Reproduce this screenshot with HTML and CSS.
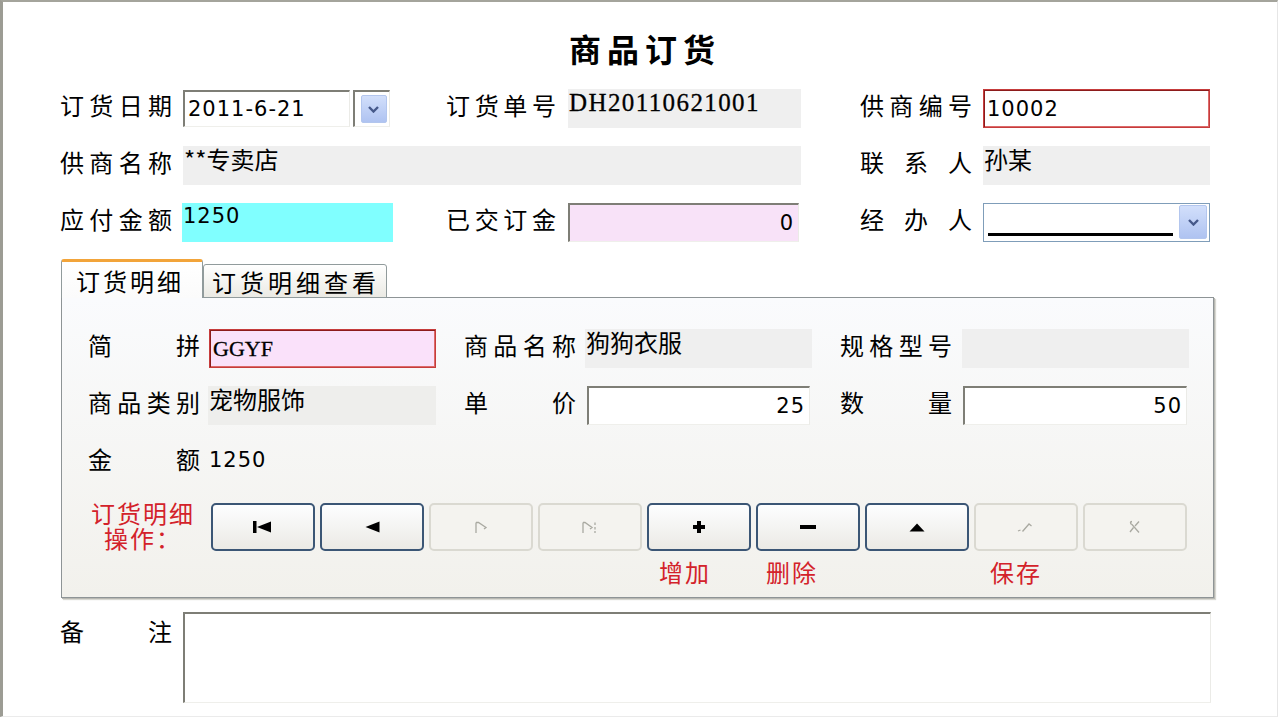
FILE: index.html
```html
<!DOCTYPE html>
<html lang="zh-CN">
<head>
<meta charset="utf-8">
<title>商品订货</title>
<link rel="stylesheet" href="styles.css">
</head>
<body>
<div class="window">
  <h1 class="title">商品订货</h1>
  <div class="main">
    <div class="form-grid">
      <span class="lbl">订货日期</span>
      <div class="date-combo">
        <div class="sunken field-in num date-input">2011-6-21</div>
        <div class="sunken date-drop">
          <span class="drop-btn"><svg width="11" height="7" viewBox="0 0 11 7"><path d="M1 1 L5.5 5.5 L10 1" fill="none" stroke="#46598a" stroke-width="2.4"/></svg></span>
        </div>
      </div>
      <span class="lbl lbl-mid">订货单号</span>
      <div class="ro mono w233">DH20110621001</div>
      <span class="lbl">供商编号</span>
      <div class="red-input field-in num w227">10002</div>

      <span class="lbl">供商名称</span>
      <div class="ro span3">**专卖店</div>
      <span class="lbl">联系人</span>
      <div class="ro w227">孙某</div>

      <span class="lbl">应付金额</span>
      <div class="ro cyan num">1250</div>
      <span class="lbl lbl-mid">已交订金</span>
      <div class="sunken field-in num right pink w231">0</div>
      <span class="lbl">经办人</span>
      <div class="combo">
        <span class="combo-line"></span>
        <span class="drop-btn combo-btn"><svg width="11" height="7" viewBox="0 0 11 7"><path d="M1 1 L5.5 5.5 L10 1" fill="none" stroke="#46598a" stroke-width="2.4"/></svg></span>
      </div>
    </div>

    <div class="tabs">
      <div class="tab active">订货明细</div>
      <div class="tab">订货明细查看</div>
    </div>

    <div class="panel">
      <div class="detail-grid">
        <span class="lbl">简拼</span>
        <div class="red-input field-in mono pink w227 ml1">GGYF</div>
        <span class="lbl">商品名称</span>
        <div class="ro w227">狗狗衣服</div>
        <span class="lbl">规格型号</span>
        <div class="ro w227"></div>

        <span class="lbl">商品类别</span>
        <div class="ro w228 soft">宠物服饰</div>
        <span class="lbl">单价</span>
        <div class="sunken field-in num right w223 ml2">25</div>
        <span class="lbl">数量</span>
        <div class="sunken field-in num right w224 ml1">50</div>

        <span class="lbl">金额</span>
        <div class="ro clear num w228">1250</div>
      </div>

      <div class="ops">
        <div class="ops-label"><span class="ops-line">订货明细</span><span class="ops-line">操作：</span></div>
        <button class="btn"><svg width="20" height="12" viewBox="0 0 20 12"><rect x="0" y="0" width="3.5" height="12"/><path d="M4 6 L18 0.5 V11.5 Z"/></svg></button>
        <button class="btn"><svg width="15" height="12" viewBox="0 0 15 12"><path d="M0.5 6 L14.5 0.5 V11.5 Z"/></svg></button>
        <button class="btn off"><svg width="14" height="13" viewBox="0 0 14 13"><path d="M2 1.5 V12 M2 1.5 H4.5 L12 6.5 L10 8" fill="none" stroke="#a9a9a1" stroke-width="1.3"/></svg></button>
        <button class="btn off"><svg width="18" height="13" viewBox="0 0 18 13"><path d="M2 1.5 V12 M2 1.5 H4 L11 6.5 L9 8 M14 1.5 V4 M14 6 V8.5 M14 10 V12" fill="none" stroke="#a9a9a1" stroke-width="1.3"/></svg></button>
        <button class="btn"><svg width="14" height="14" viewBox="0 0 14 14"><path d="M7 1 V13 M1 7 H13" stroke="#000" stroke-width="4"/></svg></button>
        <button class="btn"><svg width="18" height="6" viewBox="0 0 18 6"><path d="M1 3 H17" stroke="#000" stroke-width="4"/></svg></button>
        <button class="btn"><svg width="16" height="9" viewBox="0 0 16 9"><path d="M8 0.5 L15.5 8.5 H0.5 Z"/></svg></button>
        <button class="btn off"><svg width="18" height="12" viewBox="0 0 18 12"><path d="M1 10 L3.5 9 M5.5 10.5 L12 3 L14.5 5" fill="none" stroke="#a9a9a1" stroke-width="1.3"/></svg></button>
        <button class="btn off"><svg width="16" height="14" viewBox="0 0 16 14"><path d="M5 1.5 C3 1.5 3 3.5 5 4.5 L12 12.5 M12 1.5 L8 6 M6.5 7.5 L3 12" fill="none" stroke="#a9a9a1" stroke-width="1.3"/></svg></button>
        <span class="cap c5">增加</span>
        <span class="cap c6">删除</span>
        <span class="cap c8">保存</span>
      </div>
    </div>

    <div class="memo-row">
      <span class="lbl">备注</span>
      <div class="sunken memo"></div>
    </div>
  </div>
</div>
</body>
</html>
```

FILE: styles.css
```css
* { box-sizing: border-box; }

html, body {
  margin: 0;
  padding: 0;
  background: #ffffff;
}

body {
  font-family: "Noto Sans CJK SC", "Noto Sans", sans-serif;
  font-size: 24px;
  color: #000;
}

.window {
  width: 1278px;
  height: 717px;
  border-top: 2px solid #a4a49c;
  border-left: 3px solid #9c9c94;
  border-right: 1px solid #e6e6e6;
  border-bottom: 1px solid #ebebeb;
  background: #fff;
  overflow: hidden;
}

.title {
  margin: 26px 0 0;
  height: 40px;
  line-height: 40px;
  text-align: center;
  font-size: 32px;
  font-weight: 700;
  letter-spacing: 6px;
  padding-left: 10px;
}

.main {
  padding-left: 57px;
}

/* ---------- labels ---------- */
.lbl {
  display: block;
  width: 112px;
  height: 32px;
  line-height: 32px;
  text-align: justify;
  text-align-last: justify;
  align-self: start;
}

.lbl-mid { width: 110px; }

/* ---------- generic fields ---------- */
.ro {
  background: #efefef;
  line-height: 26px;
  padding-left: 1px;
  white-space: nowrap;
}

.ro.soft { background: #eeeeec; }
.ro.clear { background: transparent; padding-top: 4px; }
.cyan { background: #80ffff; width: 211px; margin-left: -1px; }

.mono {
  font-family: "Liberation Serif", "DejaVu Serif", serif;
  font-size: 22px;
  letter-spacing: 0;
  -webkit-text-stroke: 0.3px #000;
}

.ro.mono {
  font-size: 25px;
  padding-top: 1px;
  letter-spacing: 1.4px;
}

.num {
  font-family: "DejaVu Sans", sans-serif;
  font-size: 21px;
  letter-spacing: 1px;
}

.field-in {
  display: flex;
  align-items: center;
  padding-left: 3px;
  white-space: nowrap;
}

.field-in.right {
  justify-content: flex-end;
  padding-right: 4px;
}

.sunken {
  background: #fff;
  border-top: 2px solid #7e7e76;
  border-left: 2px solid #7e7e76;
  border-right: 1px solid #ebebe7;
  border-bottom: 1px solid #efefeb;
}

.pink { background: #f8e2f8; }

.red-input {
  background: #fff;
  border: 1px solid #c63c3c;
  box-shadow: inset 1px 1px 0 #8c1c1c, inset -1px -1px 0 #dc6a6a;
}

.red-input.pink { background: #fae1fa; }

.w223 { width: 223px; }
.w224 { width: 224px; }
.w227 { width: 227px; }
.w228 { width: 228px; }
.w231 { width: 231px; }
.w233 { width: 233px; }
.ml1 { margin-left: 1px; }
.ml2 { margin-left: 2px; }

/* ---------- top form ---------- */
.form-grid {
  margin-top: 21px;
  display: grid;
  grid-template-columns: 123px 263px 122px 292px 123px 227px;
  grid-template-rows: 39px 39px 39px;
  row-gap: 18px;
}

.span3 {
  grid-column: span 3;
  width: 618px;
}

.date-combo {
  display: flex;
  gap: 3px;
  width: 207px;
  padding-top: 1px;
  height: 38px;
}

.date-input {
  width: 167px;
  height: 37px;
  padding-left: 3px;
}

.date-drop {
  width: 37px;
  height: 37px;
  display: flex;
  align-items: flex-start;
  justify-content: center;
  padding-top: 3px;
  padding-left: 3px;
}

.drop-btn {
  width: 26px;
  height: 28px;
  display: flex;
  align-items: center;
  justify-content: center;
  background: linear-gradient(#d2dffb, #afc3f1);
  border: 1px solid #b3c6ee;
  border-radius: 2px;
}

.combo {
  width: 227px;
  height: 39px;
  border: 1px solid #7f9db9;
  background: #fff;
  display: flex;
  align-items: stretch;
  gap: 6px;
  padding: 1px 2px 2px 4px;
}

.combo-line {
  flex: 1;
  align-self: flex-end;
  height: 3px;
  background: #000;
  margin-bottom: 3px;
}

.combo-btn {
  width: 28px;
  height: auto;
}

/* ---------- tabs ---------- */
.tabs {
  margin-top: 17px;
  margin-left: 1px;
  margin-bottom: -1px;
  display: flex;
  align-items: flex-end;
  position: relative;
  z-index: 1;
}

.tab {
  width: 184px;
  height: 34px;
  border: 1px solid #919b9c;
  border-radius: 3px 3px 0 0;
  background: linear-gradient(#ffffff, #ebeae4);
  line-height: 30px;
  padding: 2px 0 0 8px;
  letter-spacing: 4px;
  white-space: nowrap;
}

.tab.active {
  width: 142px;
  height: 39px;
  border-top: 3px solid #f2a43a;
  border-bottom: none;
  background: linear-gradient(#ffffff, #fbfbfb);
  padding: 4px 0 0 14px;
  letter-spacing: 3px;
}

/* ---------- panel ---------- */
.panel {
  width: 1153px;
  margin-left: 1px;
  border: 1px solid #8e9496;
  box-shadow: 1px 1px 0 #b8b8b2, 2px 2px 1px #d8d8d2;
  background: linear-gradient(#fafbfd, #f2f1ec);
  padding: 31px 0 11px 0;
}

.detail-grid {
  margin-left: 26px;
  display: grid;
  grid-template-columns: 120px 256px 121px 255px 122px 227px;
  grid-template-rows: 39px 39px 39px;
  row-gap: 18px;
}

.ops {
  margin-top: 21px;
  margin-left: 24px;
  display: grid;
  grid-template-columns: 120px repeat(9, 104px);
  grid-template-rows: 48px 28px;
  column-gap: 5px;
  row-gap: 7px;
}

.ops-label {
  width: 112px;
  align-self: center;
  display: flex;
  flex-direction: column;
  align-items: center;
  color: #d3222a;
  letter-spacing: 2px;
  padding-left: 2px;
  margin-top: -4px;
}

.ops-line {
  display: block;
  height: 25px;
  line-height: 25px;
}

.btn {
  height: 48px;
  padding: 0;
  margin: 0;
  border: 2px solid #3b5675;
  border-radius: 5px;
  background: linear-gradient(#fdfeff, #ebeae5);
  display: flex;
  align-items: center;
  justify-content: center;
}

.btn.off {
  border-color: #dad9d1;
  background: #f4f3ef;
}

.cap {
  grid-row: 2;
  color: #d3222a;
  line-height: 28px;
  letter-spacing: 2px;
}

.c5 { grid-column: 6; padding-left: 12px; }
.c6 { grid-column: 7; padding-left: 10px; }
.c8 { grid-column: 9; padding-left: 16px; }

/* ---------- memo ---------- */
.memo-row {
  margin-top: 14px;
  display: flex;
  gap: 11px;
}

.memo-row .lbl { margin-top: 3px; }

.memo {
  width: 1028px;
  height: 91px;
}
```
